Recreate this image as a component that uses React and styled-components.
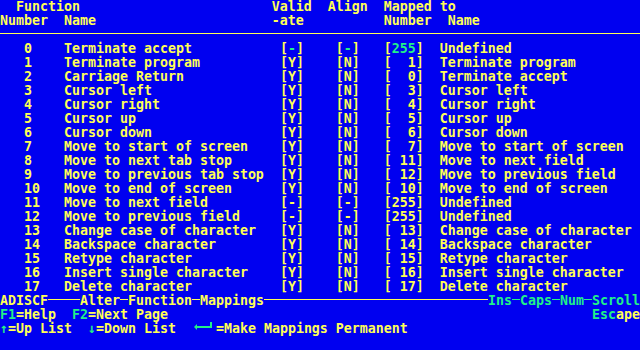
import styled, { createGlobalStyle } from 'styled-components';

const YELLOW = '#ffff55';
const GREEN = '#22f088';
const BLUE = '#0000f0';

const GlobalStyle = createGlobalStyle`
  html, body {
    margin: 0;
    padding: 0;
    background: ${BLUE};
  }
`;

const Screen = styled.div`
  width: 640px;
  height: 350px;
  overflow: hidden;
  background: ${BLUE};
  color: ${YELLOW};
  font-family: 'DejaVu Sans Mono', 'Liberation Mono', monospace;
  font-size: 13.29px;
  font-weight: bold;
  line-height: 14px;
  white-space: pre;
`;

const Row = styled.div`
  display: flex;
  height: 14px;
`;

const Text = styled.span`
  color: ${(p) => (p.$hi ? GREEN : 'inherit')};
`;

const Rule = styled.div`
  height: 14px;
  padding-top: 5px;
  box-sizing: border-box;

  &::after {
    content: '';
    display: block;
    height: 1px;
    background: ${YELLOW};
  }
`;

// a run of box-drawing dashes; $n cells wide, or fills the rest when $fill
const Dash = styled.span`
  display: inline-block;
  height: 14px;
  width: ${(p) => (p.$fill ? 'auto' : `${p.$n * 8}px`)};
  flex: ${(p) => (p.$fill ? '1' : 'none')};
  background: linear-gradient(
      ${(p) => (p.$hi ? GREEN : YELLOW)},
      ${(p) => (p.$hi ? GREEN : YELLOW)}
    )
    0 5px / 100% 1px no-repeat;
`;

const Spacer = styled.span`
  flex: 1;
`;

const EnterKey = () => (
  <svg width='24' height='14' viewBox='0 0 24 14'>
    <polygon points='2,5 5,2 5,8' fill={GREEN} />
    <rect x='5' y='4' width='15' height='2' fill={GREEN} />
    <rect x='18' y='0' width='2' height='5' fill={GREEN} />
  </svg>
);

const mappings = [
  [0, 'Terminate accept', '-', '-', 255, 'Undefined'],
  [1, 'Terminate program', 'Y', 'N', 1, 'Terminate program'],
  [2, 'Carriage Return', 'Y', 'N', 0, 'Terminate accept'],
  [3, 'Cursor left', 'Y', 'N', 3, 'Cursor left'],
  [4, 'Cursor right', 'Y', 'N', 4, 'Cursor right'],
  [5, 'Cursor up', 'Y', 'N', 5, 'Cursor up'],
  [6, 'Cursor down', 'Y', 'N', 6, 'Cursor down'],
  [7, 'Move to start of screen', 'Y', 'N', 7, 'Move to start of screen'],
  [8, 'Move to next tab stop', 'Y', 'N', 11, 'Move to next field'],
  [9, 'Move to previous tab stop', 'Y', 'N', 12, 'Move to previous field'],
  [10, 'Move to end of screen', 'Y', 'N', 10, 'Move to end of screen'],
  [11, 'Move to next field', '-', '-', 255, 'Undefined'],
  [12, 'Move to previous field', '-', '-', 255, 'Undefined'],
  [13, 'Change case of character', 'Y', 'N', 13, 'Change case of character'],
  [14, 'Backspace character', 'Y', 'N', 14, 'Backspace character'],
  [15, 'Retype character', 'Y', 'N', 15, 'Retype character'],
  [16, 'Insert single character', 'Y', 'N', 16, 'Insert single character'],
  [17, 'Delete character', 'Y', 'N', 17, 'Delete character'],
];

const MappingRow = ({ item, current }) => {
  const [num, name, valid, align, to, toName] = item;
  const lead = ('   ' + num).padEnd(8) + name.padEnd(27);
  return (
    <Row>
      {lead}
      {'['}
      <Text $hi={current}>{valid}</Text>
      {']    ['}
      <Text $hi={current}>{align}</Text>
      {']   ['}
      <Text $hi={current}>{String(to).padStart(3)}</Text>
      {']  '}
      {toName}
    </Row>
  );
};

const App = () => {
  return (
    <>
      <GlobalStyle />
      <Screen>
        <Row>{'  Function                        Valid  Align  Mapped to'}</Row>
        <Row>{'Number  Name                      -ate          Number  Name'}</Row>
        <Rule />
        {mappings.map((item) => (
          <MappingRow key={item[0]} item={item} current={item[0] === 0} />
        ))}
        <Row>
          ADISCF
          <Dash $n={4} />
          Alter
          <Dash $n={1} />
          Function
          <Dash $n={1} />
          Mappings
          <Dash $fill />
          <Text $hi>Ins</Text>
          <Dash $n={1} $hi />
          <Text $hi>Caps</Text>
          <Dash $n={1} $hi />
          <Text $hi>Num</Text>
          <Dash $n={1} $hi />
          <Text $hi>Scroll</Text>
        </Row>
        <Row>
          <Text $hi>F1</Text>
          {'=Help  '}
          <Text $hi>F2</Text>
          =Next Page
          <Spacer />
          <Text $hi>Esc</Text>
          ape
        </Row>
        <Row>
          <Text $hi>↑</Text>
          {'=Up List  '}
          <Text $hi>↓</Text>
          {'=Down List  '}
          <EnterKey />
          =Make Mappings Permanent
        </Row>
      </Screen>
    </>
  );
};

export default App;
